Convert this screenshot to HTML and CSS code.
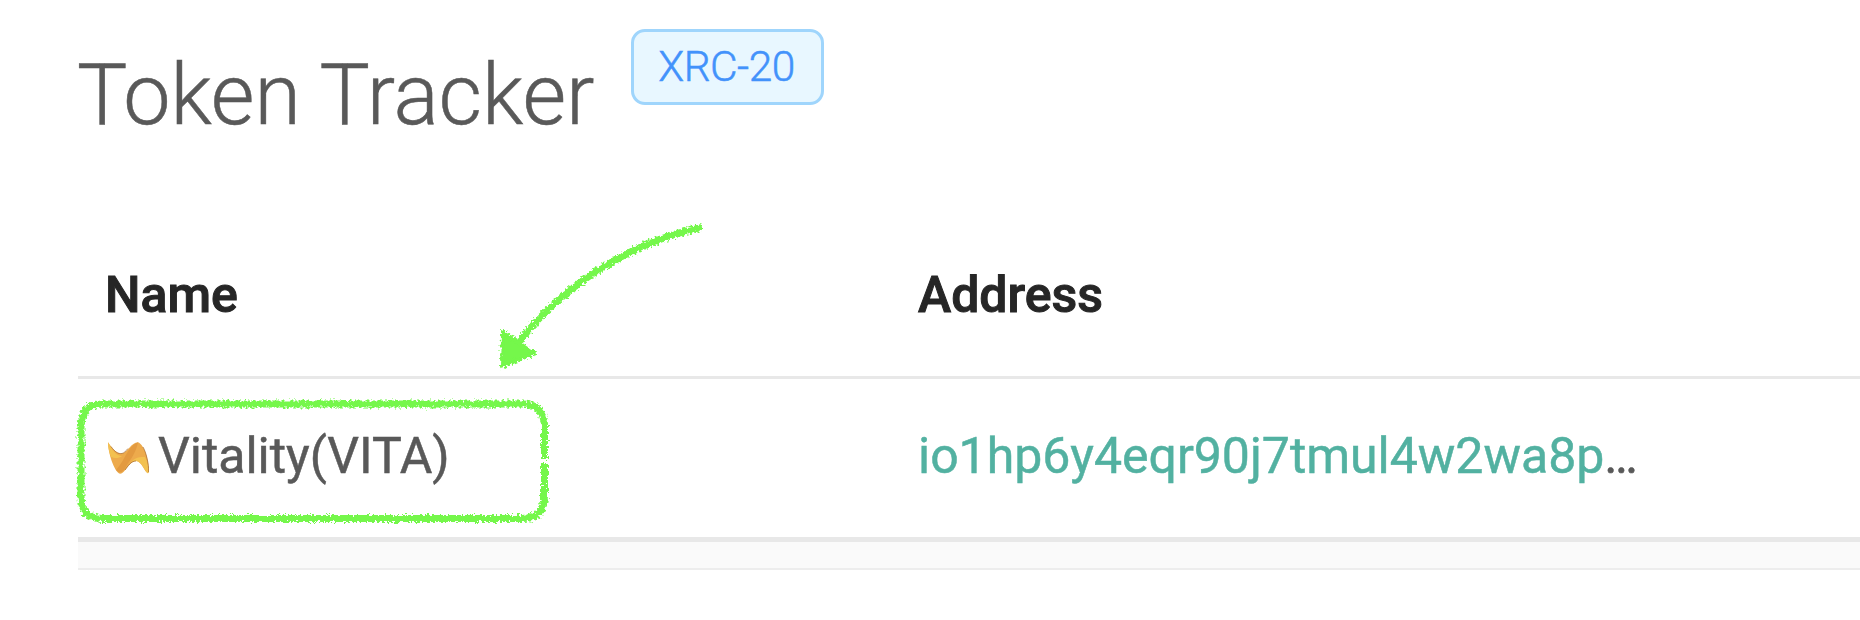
FILE: index.html
```html
<!DOCTYPE html>
<html lang="en">
<head>
<meta charset="utf-8">
<title>Token Tracker</title>
<link rel="stylesheet" href="styles.css">
</head>
<body>
<main class="page">
  <header class="heading">
    <h1 class="title">Token Tracker</h1>
    <span class="tag">XRC-20</span>
  </header>
  <section class="table">
    <div class="row row-head">
      <div class="cell">Name</div>
      <div class="cell">Address</div>
    </div>
    <div class="row row-body">
      <div class="cell token">
        <svg class="token-icon" viewBox="0 0 41 32">
          <path fill="#edaa4c" d="M0 .3C4 6 8 12 14 11.500C20 10.500 23 .5 30 .3C37 3 42 22 40.500 31C37 32 34 19 28 19C21 19 17 32 12 31.700C6 30 0 10 0 .3Z"/>
          <path fill="#f3c150" d="M0 .3C5 9 8 14 14 14C10 17 6 16 3 15C1 10 0 5 0 .3Z"/>
          <path fill="#e39a40" d="M8 28C18 17 19 5 30 .3C28 10 24 16 19 23C16 29 13 33 8 28Z"/>
          <path fill="#f3c150" d="M22 21C28 14 34 15 37 15C40 21 42 29 40 31.500C37 30 34 19 28 19C25 19 23 20 22 21Z"/>
          <path fill="none" stroke="#a3672c" stroke-width=".7" d="M3 4.500C7 10 10 12 14 11.500C16 11 18 9 20 6.500M17 28C20 24 23 19 28 19M35 5C38 10 41 22 40.600 30"/>
        </svg>
        <span>Vitality(VITA)</span>
      </div>
      <div class="cell"><a class="address">io1hp6y4eqr90j7tmul4w2wa8p</a>…</div>
    </div>
    <div class="table-footer"></div>
  </section>
  <svg class="marker" viewBox="0 0 1860 620">
    <defs>
      <filter id="rough" filterUnits="userSpaceOnUse" x="60" y="210" width="660" height="330">
        <feTurbulence type="fractalNoise" baseFrequency=".4" numOctaves="3" seed="4" result="noise"/>
        <feDisplacementMap in="SourceGraphic" in2="noise" scale="7" xChannelSelector="R" yChannelSelector="G"/>
      </filter>
    </defs>
    <g filter="url(#rough)">
      <path class="stroke" d="M544.500 459V427Q544.500 404 523 404H102Q81 404 81 427V496Q81 518.500 103 518.500H522Q544.500 518.500 544.500 496V463"/>
      <path class="stroke" d="M702 227.500C638 240 566 281 519 342"/>
      <path class="head" d="M503 332L534 353.500L502 366.500Z"/>
    </g>
  </svg>
</main>
</body>
</html>
```
FILE: styles.css
```css
body {
  margin: 0;
  background: #fff;
  color: #595959;
  font-family: Roboto, "Liberation Sans", sans-serif;
}

.page {
  position: relative;
  box-sizing: border-box;
  width: 1860px;
  height: 620px;
  padding-left: 78px;
  overflow: hidden;
}

.heading {
  display: flex;
  align-items: flex-start;
  height: 214px;
}

.title {
  width: 553px;
  margin: 0;
  font-size: 84.4px;
  font-weight: 300;
  line-height: 191px;
  letter-spacing: -.1px;
  text-indent: -1px;
  white-space: nowrap;
  -webkit-text-stroke: .5px;
}

.tag {
  box-sizing: border-box;
  width: 193px;
  height: 76px;
  margin-top: 29px;
  padding-right: 2px;
  border: 3px solid #9fd5fc;
  border-radius: 14px;
  background: #e8f7ff;
  color: #4292fb;
  font-size: 42.4px;
  font-weight: 300;
  line-height: 69px;
  letter-spacing: -.5px;
  text-align: center;
  -webkit-text-stroke: .5px;
}

.row {
  display: grid;
  grid-template-columns: 813px 1fr;
  font-size: 50px;
}

.cell {
  padding-left: 27px;
  white-space: nowrap;
}

.row-head {
  border-bottom: 3px solid #e8e8e8;
  color: #262626;
  font-weight: 500;
  line-height: 162px;
  -webkit-text-stroke: 1px;
}

.row-body {
  height: 158px;
  line-height: 154px;
  letter-spacing: -.03px;
  -webkit-text-stroke: .5px;
}

.token {
  display: flex;
  align-items: center;
  gap: 9px;
  height: 154px;
  padding-left: 30px;
}

.token-icon {
  width: 41px;
  height: 32px;
  margin-top: 4px;
}

.address {
  color: #52b1a1;
}

.table-footer {
  height: 26px;
  border-top: 5px solid #e8e8e8;
  border-bottom: 2px solid #ededed;
  background: #fafafa;
}

.marker {
  position: absolute;
  top: 0;
  left: 0;
  width: 1860px;
  height: 620px;
  pointer-events: none;
}

.stroke {
  fill: none;
  stroke: #74f74b;
  stroke-width: 7;
}

.head {
  fill: #74f74b;
  stroke: #74f74b;
  stroke-width: 4;
  stroke-linejoin: round;
}
```
